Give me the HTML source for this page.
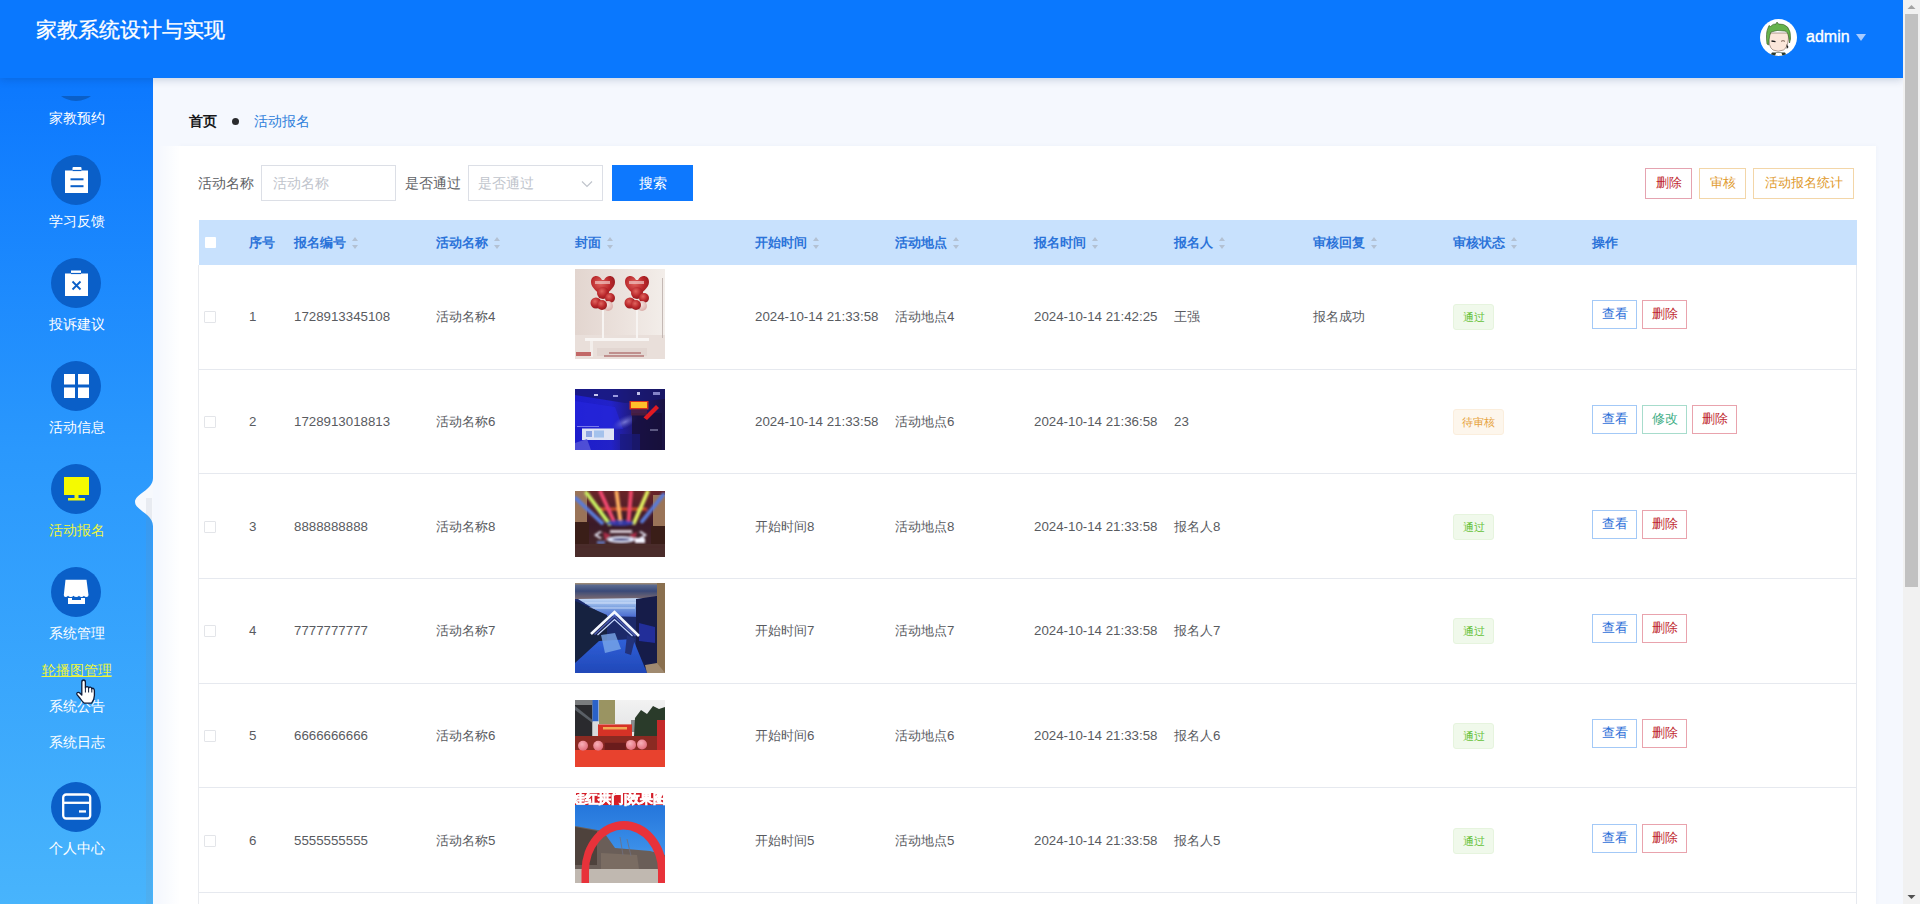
<!DOCTYPE html><html><head><meta charset="utf-8"><title>活动报名</title><style>
*{box-sizing:border-box;margin:0;padding:0}
html,body{width:1920px;height:904px;overflow:hidden}
body{position:relative;background:#f5f8fe;font-family:"Liberation Sans", sans-serif;color:#606266}
.a{position:absolute;white-space:nowrap}
.t{position:absolute;white-space:nowrap;line-height:20px;height:20px}
#hdr{position:absolute;left:0;top:0;width:1903px;height:78px;background:#0a78fe;z-index:5;box-shadow:0 2px 8px rgba(0,40,90,.18)}
#side{position:absolute;left:0;top:78px;width:153px;height:826px;background:linear-gradient(#0c78fe 0%,#2a98fd 45%,#48b4fc 100%);overflow:hidden;z-index:3}
.circ{position:absolute;left:51px;width:50px;height:50px;border-radius:50%;background:#0a5fc8}
.circ svg{position:absolute;left:0;top:0}
.lab{position:absolute;left:0;width:153px;text-align:center;color:#fff;font-size:14px;line-height:20px;height:20px}
#card{position:absolute;left:180px;top:146px;width:1696px;height:800px;background:#fff;box-shadow:0 0 5px rgba(60,80,120,.04)}
.th{position:absolute;top:233px;font-size:13px;font-weight:bold;color:#2b73d9;line-height:20px}
.sort{display:inline-block;vertical-align:middle;width:8px;height:14px;margin-left:5px;position:relative;top:-1px}
.td{position:absolute;font-size:13.3px;color:#595b5f;line-height:20px;height:20px}
.cb{position:absolute;left:204px;width:12px;height:12px;border:1px solid #e3e5e9;background:#fff;border-radius:1px}
.btn{position:absolute;height:29px;width:45px;border:1px solid;font-size:13px;line-height:25px;text-align:center;background:#fff}
.bv{border-color:#a3c9f7;color:#2d6fd8}
.bd{border-color:#e9a3ad;color:#c0282f}
.be{border-color:#a7dccc;color:#3fae86}
.tag{position:absolute;height:26px;font-size:11px;line-height:26px;text-align:center;border-radius:3px}
.tp{background:#f0f9eb;color:#67c23a;width:41px;border:1px solid #e6f4de;line-height:24px}
.tw{background:#fdf6ec;color:#e6a23c;width:51px;border:1px solid #fbeedd;line-height:24px}
.rowline{position:absolute;left:199px;width:1658px;height:1px;background:#e6e9ef}
</style></head><body>
<div class="t" style="left:189px;top:111px;font-size:14px;font-weight:bold;color:#17181a">首页</div>
<div class="a" style="left:232px;top:118px;width:7px;height:7px;border-radius:50%;background:#2a2b2e"></div>
<div class="t" style="left:254px;top:111px;font-size:14px;color:#2f80db">活动报名</div>
<div id="card"></div>
<div class="a" style="left:158px;top:146px;width:22px;height:758px;background:linear-gradient(90deg,rgba(255,255,255,0),#fff)"></div>
<div class="t" style="left:198px;top:173px;font-size:14px;color:#606266">活动名称</div>
<div class="a" style="left:261px;top:165px;width:135px;height:36px;border:1px solid #dcdfe6;background:#fff"></div>
<div class="t" style="left:273px;top:173px;font-size:14px;color:#c0c4cc">活动名称</div>
<div class="t" style="left:405px;top:173px;font-size:14px;color:#606266">是否通过</div>
<div class="a" style="left:468px;top:165px;width:135px;height:36px;border:1px solid #dcdfe6;background:#fff"></div>
<div class="t" style="left:478px;top:173px;font-size:14px;color:#c0c4cc">是否通过</div>
<svg class="a" style="left:581px;top:180px" width="12" height="8" viewBox="0 0 12 8"><path d="M1 1.5 L6 6.5 L11 1.5" fill="none" stroke="#c0c4cc" stroke-width="1.2"/></svg>
<div class="a" style="left:612px;top:165px;width:81px;height:36px;background:#0d78fe;color:#fff;font-size:14px;line-height:36px;text-align:center">搜索</div>
<div class="a" style="left:1645px;top:168px;width:47px;height:31px;border:1px solid #e5a3b0;color:#c0282f;font-size:13.3px;line-height:28px;text-align:center;background:#fff">删除</div>
<div class="a" style="left:1699px;top:168px;width:47px;height:31px;border:1px solid #f3d6a8;color:#e09a2c;font-size:13.3px;line-height:28px;text-align:center;background:#fff">审核</div>
<div class="a" style="left:1753px;top:168px;width:101px;height:31px;border:1px solid #f3d6a8;color:#e09a2c;font-size:13.3px;line-height:28px;text-align:center;background:#fff">活动报名统计</div>
<div class="a" style="left:199px;top:220px;width:1658px;height:45px;background:#c8e1fd"></div>
<div class="a" style="left:198px;top:265px;width:1px;height:640px;background:#e9ebef"></div>
<div class="a" style="left:1856px;top:265px;width:1px;height:640px;background:#e6e9ef"></div>
<div class="a" style="left:205px;top:237px;width:11px;height:11px;background:#fff;border-radius:1px"></div>
<div class="th" style="left:249px">序号</div>
<div class="th" style="left:294px">报名编号<svg class="sort" viewBox="0 0 8 14" width="8" height="14"><path d="M4 1 L7 5 L1 5 Z" fill="#b3c1d3"/><path d="M4 13 L7 9 L1 9 Z" fill="#b3c1d3"/></svg></div>
<div class="th" style="left:436px">活动名称<svg class="sort" viewBox="0 0 8 14" width="8" height="14"><path d="M4 1 L7 5 L1 5 Z" fill="#b3c1d3"/><path d="M4 13 L7 9 L1 9 Z" fill="#b3c1d3"/></svg></div>
<div class="th" style="left:575px">封面<svg class="sort" viewBox="0 0 8 14" width="8" height="14"><path d="M4 1 L7 5 L1 5 Z" fill="#b3c1d3"/><path d="M4 13 L7 9 L1 9 Z" fill="#b3c1d3"/></svg></div>
<div class="th" style="left:755px">开始时间<svg class="sort" viewBox="0 0 8 14" width="8" height="14"><path d="M4 1 L7 5 L1 5 Z" fill="#b3c1d3"/><path d="M4 13 L7 9 L1 9 Z" fill="#b3c1d3"/></svg></div>
<div class="th" style="left:895px">活动地点<svg class="sort" viewBox="0 0 8 14" width="8" height="14"><path d="M4 1 L7 5 L1 5 Z" fill="#b3c1d3"/><path d="M4 13 L7 9 L1 9 Z" fill="#b3c1d3"/></svg></div>
<div class="th" style="left:1034px">报名时间<svg class="sort" viewBox="0 0 8 14" width="8" height="14"><path d="M4 1 L7 5 L1 5 Z" fill="#b3c1d3"/><path d="M4 13 L7 9 L1 9 Z" fill="#b3c1d3"/></svg></div>
<div class="th" style="left:1174px">报名人<svg class="sort" viewBox="0 0 8 14" width="8" height="14"><path d="M4 1 L7 5 L1 5 Z" fill="#b3c1d3"/><path d="M4 13 L7 9 L1 9 Z" fill="#b3c1d3"/></svg></div>
<div class="th" style="left:1313px">审核回复<svg class="sort" viewBox="0 0 8 14" width="8" height="14"><path d="M4 1 L7 5 L1 5 Z" fill="#b3c1d3"/><path d="M4 13 L7 9 L1 9 Z" fill="#b3c1d3"/></svg></div>
<div class="th" style="left:1453px">审核状态<svg class="sort" viewBox="0 0 8 14" width="8" height="14"><path d="M4 1 L7 5 L1 5 Z" fill="#b3c1d3"/><path d="M4 13 L7 9 L1 9 Z" fill="#b3c1d3"/></svg></div>
<div class="th" style="left:1592px">操作</div>
<div class="rowline" style="top:368.67px"></div>
<div class="cb" style="top:311.33px"></div>
<div class="td" style="left:249px;top:307.33px">1</div>
<div class="td" style="left:294px;top:307.33px">1728913345108</div>
<div class="td" style="left:436px;top:307.33px">活动名称4</div>
<div class="td" style="left:755px;top:307.33px">2024-10-14 21:33:58</div>
<div class="td" style="left:895px;top:307.33px">活动地点4</div>
<div class="td" style="left:1034px;top:307.33px">2024-10-14 21:42:25</div>
<div class="td" style="left:1174px;top:307.33px">王强</div>
<div class="td" style="left:1313px;top:307.33px">报名成功</div>
<div class="a img1" style="left:575px;top:269.33px;width:90px;height:90px;overflow:hidden"><div style="filter:blur(.35px)"><svg width="90" height="90" viewBox="0 0 90 90"><defs>
<linearGradient id="i1bg" x1="0" y1="0" x2="1" y2="0"><stop offset="0" stop-color="#e2d5cf"/><stop offset=".5" stop-color="#ebe1dc"/><stop offset="1" stop-color="#f3eeea"/></linearGradient>
<radialGradient id="i1b" cx=".4" cy=".35" r=".7"><stop offset="0" stop-color="#e0645e"/><stop offset=".6" stop-color="#b8262a"/><stop offset="1" stop-color="#8e1a1e"/></radialGradient>
<radialGradient id="i1p" cx=".4" cy=".35" r=".7"><stop offset="0" stop-color="#f5e4e0"/><stop offset="1" stop-color="#d9a9a5"/></radialGradient>
</defs>
<rect width="90" height="90" fill="url(#i1bg)"/>
<rect x="0" y="66" width="90" height="24" fill="#e9dfda"/>
<g id="i1c">
<rect x="27" y="40" width="2" height="30" fill="#f7f4f2"/>
<path d="M27 11 C24 5 16 6 16 13 C16 19 23 23 28 28 C33 23 40 19 40 13 C40 6 32 5 29 11 Z" fill="url(#i1b)"/>
<circle cx="28" cy="24" r="6" fill="url(#i1b)"/>
<circle cx="35" cy="29" r="5" fill="url(#i1b)"/>
<circle cx="21" cy="34" r="5.5" fill="url(#i1b)"/>
<circle cx="33" cy="37" r="5" fill="url(#i1p)"/>
<circle cx="27" cy="36" r="5" fill="url(#i1b)"/>
<rect x="20" y="12" width="15" height="3" fill="#f0c8c4" opacity=".7"/>
</g>
<use href="#i1c" x="34"/>
<rect x="87" y="9" width=".8" height="60" fill="#b8aca8"/>
<rect x="10" y="69" width="64" height="3" fill="#f8f5f3"/>
<rect x="15" y="72" width="3" height="16" fill="#f3eeeb"/>
<rect x="22" y="79" width="50" height="8" fill="#ddd0cb" opacity=".6"/>
<rect x="1" y="83" width="15" height="4" fill="#b84a4a" opacity=".8"/>
<rect x="34" y="83" width="32" height="2" fill="#b07070" opacity=".7"/>
<rect x="29" y="86" width="40" height="2" fill="#b07070" opacity=".7"/>
</svg>
</div></div>
<div class="tag tp" style="left:1453px;top:304.33px">通过</div>
<div class="btn bv" style="left:1592px;top:300.33px">查看</div>
<div class="btn bd" style="left:1642px;top:300.33px">删除</div>
<div class="rowline" style="top:473.34px"></div>
<div class="cb" style="top:416.00px"></div>
<div class="td" style="left:249px;top:412.00px">2</div>
<div class="td" style="left:294px;top:412.00px">1728913018813</div>
<div class="td" style="left:436px;top:412.00px">活动名称6</div>
<div class="td" style="left:755px;top:412.00px">2024-10-14 21:33:58</div>
<div class="td" style="left:895px;top:412.00px">活动地点6</div>
<div class="td" style="left:1034px;top:412.00px">2024-10-14 21:36:58</div>
<div class="td" style="left:1174px;top:412.00px">23</div>
<div class="a img2" style="left:575px;top:388.50px;width:90px;height:61px;overflow:hidden"><div style="filter:blur(.35px)"><svg width="90" height="61" viewBox="0 0 90 61"><defs>
<linearGradient id="i2bg" x1="0" y1="0" x2="1" y2="0"><stop offset="0" stop-color="#1c1ccc"/><stop offset=".4" stop-color="#2222c8"/><stop offset=".65" stop-color="#201a7a"/><stop offset="1" stop-color="#1a1240"/></linearGradient>
<radialGradient id="i2h" cx=".5" cy=".5" r=".5"><stop offset="0" stop-color="#8a8ae0" stop-opacity=".8"/><stop offset="1" stop-color="#5050c0" stop-opacity="0"/></radialGradient>
</defs>
<rect width="90" height="61" fill="url(#i2bg)"/>
<path d="M0 0 H90 V10 L50 14 L0 6 Z" fill="#181870" opacity=".75"/>
<rect x="19" y="5" width="4" height="2" fill="#c8c8f0"/><rect x="38" y="6" width="5" height="2" fill="#9a9ae0"/><rect x="62" y="3" width="3" height="3" fill="#c0c0e8"/><rect x="78" y="3" width="7" height="3" fill="#a0a0e0" opacity=".8"/>
<path d="M0 12 L40 18 L48 40 L0 38 Z" fill="#2626e0" opacity=".6"/>
<ellipse cx="50" cy="33" rx="14" ry="6" fill="url(#i2h)" transform="rotate(-25 50 33)"/>
<rect x="57" y="24" width="30" height="37" fill="#160f38" opacity=".8"/>
<rect x="54.5" y="12" width="19" height="8.5" fill="#d8301a"/>
<rect x="56" y="13" width="16" height="6" fill="#ffbe2a"/>
<rect x="56" y="20.5" width="16" height="6" fill="#502040" opacity=".8"/>
<path d="M81 16 L84 19 L72 31 L68.5 28.5 Z" fill="#e01a22"/>
<rect x="2" y="37" width="22" height="1" fill="#9090f0" opacity=".8"/>
<rect x="7" y="39.5" width="32" height="11.5" fill="#dfe4f4"/>
<rect x="11" y="42" width="6" height="6" fill="#6a8ad8" opacity=".7"/><rect x="19" y="41.5" width="10" height="7" fill="#8ab4e8" opacity=".7"/>
<path d="M0 54 L12 50 L16 61 H0 Z" fill="#5a5ad8" opacity=".8"/>
<rect x="45" y="45" width="20" height="16" fill="#1a1a7a" opacity=".7"/>
<rect x="75" y="40" width="8" height="2" fill="#8a8ab0" opacity=".6"/>
</svg>
</div></div>
<div class="tag tw" style="left:1453px;top:409.00px">待审核</div>
<div class="btn bv" style="left:1592px;top:405.00px">查看</div>
<div class="btn be" style="left:1642px;top:405.00px">修改</div>
<div class="btn bd" style="left:1692px;top:405.00px">删除</div>
<div class="rowline" style="top:578.01px"></div>
<div class="cb" style="top:520.68px"></div>
<div class="td" style="left:249px;top:516.68px">3</div>
<div class="td" style="left:294px;top:516.68px">8888888888</div>
<div class="td" style="left:436px;top:516.68px">活动名称8</div>
<div class="td" style="left:755px;top:516.68px">开始时间8</div>
<div class="td" style="left:895px;top:516.68px">活动地点8</div>
<div class="td" style="left:1034px;top:516.68px">2024-10-14 21:33:58</div>
<div class="td" style="left:1174px;top:516.68px">报名人8</div>
<div class="a img3" style="left:575px;top:490.68px;width:90px;height:66px;overflow:hidden"><div style="filter:blur(.35px)"><svg width="90" height="66" viewBox="0 0 90 66"><defs>
<linearGradient id="i3bg" x1="0" y1="0" x2="0" y2="1"><stop offset="0" stop-color="#6a2428"/><stop offset=".5" stop-color="#3a1a28"/><stop offset="1" stop-color="#4a2a28"/></linearGradient>
<filter id="i3f" x="-10%" y="-10%" width="120%" height="120%"><feGaussianBlur stdDeviation=".8"/></filter>
</defs>
<rect width="90" height="66" fill="url(#i3bg)"/>
<rect x="0" y="0" width="12" height="31" fill="#9a7458"/>
<rect x="78" y="4" width="12" height="31" fill="#9a7458"/>
<rect x="0" y="31" width="14" height="25" fill="#3a1e18"/>
<rect x="76" y="35" width="14" height="21" fill="#3a1e18"/>
<g filter="url(#i3f)">
<rect x="25" y="16.5" width="47" height="3" fill="#e0502a" opacity=".9"/>
<g stroke-linecap="round" stroke-width="3.8">
<path d="M0.5 7 L27 32" stroke="#5a7ad8"/>
<path d="M11.5 2 L34.5 33" stroke="#c8f060"/>
<path d="M25.5 1 L39 30.5" stroke="#f04a70"/>
<path d="M41.5 1 L45.5 31" stroke="#ffb060"/>
<path d="M56 1 L53.5 30.5" stroke="#f04a6a"/>
<path d="M72.5 1 L59 32" stroke="#e0f060"/>
<path d="M88.5 3.5 L67 30.5" stroke="#5a7ad8"/>
</g>
<ellipse cx="45" cy="32" rx="14" ry="3" fill="#3040c0" opacity=".8"/>
<path d="M25 40 L19 44 L25 48 L27 47 L22 44 L27 41 Z" fill="#f0f0ff"/>
<path d="M66 40 L72 44 L66 48 L64 47 L69 44 L64 41 Z" fill="#f0f0ff"/>
<path d="M28 41 L36 44 L30 50 Z" fill="#c03050" opacity=".8"/>
<path d="M62 41 L54 44 L60 50 Z" fill="#c03050" opacity=".8"/>
<rect x="35" y="39" width="22" height="3" fill="#f0e8f0" opacity=".85"/>
<ellipse cx="46" cy="48.5" rx="14" ry="3.5" fill="#dfe4f8"/>
<ellipse cx="46" cy="48.5" rx="9" ry="1.5" fill="#404080"/>
<rect x="60" y="47" width="10" height="5" fill="#f4f4ff"/>
<rect x="22" y="50" width="8" height="3" fill="#6a8ad8" opacity=".8"/>
</g>
<rect x="0" y="53" width="90" height="13" fill="#4a2c2a"/>
<rect x="0" y="55" width="90" height="2" fill="#4a2a2a" opacity=".7"/>
</svg>
</div></div>
<div class="tag tp" style="left:1453px;top:513.68px">通过</div>
<div class="btn bv" style="left:1592px;top:509.68px">查看</div>
<div class="btn bd" style="left:1642px;top:509.68px">删除</div>
<div class="rowline" style="top:682.68px"></div>
<div class="cb" style="top:625.35px"></div>
<div class="td" style="left:249px;top:621.35px">4</div>
<div class="td" style="left:294px;top:621.35px">7777777777</div>
<div class="td" style="left:436px;top:621.35px">活动名称7</div>
<div class="td" style="left:755px;top:621.35px">开始时间7</div>
<div class="td" style="left:895px;top:621.35px">活动地点7</div>
<div class="td" style="left:1034px;top:621.35px">2024-10-14 21:33:58</div>
<div class="td" style="left:1174px;top:621.35px">报名人7</div>
<div class="a img4" style="left:575px;top:583.35px;width:90px;height:90px;overflow:hidden"><div style="filter:blur(.35px)"><svg width="90" height="90" viewBox="0 0 90 90"><defs>
<linearGradient id="i4t" x1="0" y1="0" x2="0" y2="1"><stop offset="0" stop-color="#a89070"/><stop offset=".15" stop-color="#5a6a90"/><stop offset=".5" stop-color="#3a4a78"/><stop offset="1" stop-color="#7a6a70"/></linearGradient>
<linearGradient id="i4c" x1="0" y1="0" x2="0" y2="1"><stop offset="0" stop-color="#c8dcf8"/><stop offset=".5" stop-color="#7aa0e0"/><stop offset="1" stop-color="#4a6ad0"/></linearGradient>
<linearGradient id="i4f" x1="0" y1="0" x2="0" y2="1"><stop offset="0" stop-color="#3060d8"/><stop offset="1" stop-color="#2048b8"/></linearGradient>
<filter id="i4b"><feGaussianBlur stdDeviation=".6"/></filter>
</defs>
<g filter="url(#i4b)">
<rect width="90" height="90" fill="#1a2a6a"/>
<rect width="90" height="16" fill="url(#i4t)"/>
<path d="M3 16 L71 15 L66 34 L30 33 Z" fill="url(#i4c)"/>
<path d="M10 20 H62 M14 25 H60" stroke="#e8f0ff" stroke-width="1" opacity=".7"/>
<path d="M0 18 L32 32 L32 76 L0 80 Z" fill="#182040"/>
<path d="M61 16 L82 13 L82 86 L61 84 Z" fill="#141a48"/>
<path d="M64 40 L80 44 L80 60 L64 58 Z" fill="#2a3ad0" opacity=".6"/>
<rect x="82" y="0" width="8" height="90" fill="#8a7050"/>
<path d="M0 90 L0 80 L24 58 L58 56 L72 90 Z" fill="url(#i4f)"/>
<path d="M72 90 L70 82 L82 80 L90 90 Z" fill="#a08a70"/>
<path d="M26 52 L40 50 L46 66 L30 70 Z" fill="#7aa8e8" opacity=".8"/>
<path d="M52 52 L60 56 L56 72 L50 70 Z" fill="#24307a"/>
<path d="M16 51 L39.5 29 L64 53" fill="none" stroke="#f4f8ff" stroke-width="2.6"/>
<path d="M19.5 51.5 L39.5 33 L60.5 53" fill="none" stroke="#4a5ab0" stroke-width="1.6"/>
<path d="M22.5 52 L39.5 36.5 L57.5 53" fill="none" stroke="#c8d8ff" stroke-width="1.2"/>
</g>
</svg>
</div></div>
<div class="tag tp" style="left:1453px;top:618.35px">通过</div>
<div class="btn bv" style="left:1592px;top:614.35px">查看</div>
<div class="btn bd" style="left:1642px;top:614.35px">删除</div>
<div class="rowline" style="top:787.35px"></div>
<div class="cb" style="top:730.02px"></div>
<div class="td" style="left:249px;top:726.02px">5</div>
<div class="td" style="left:294px;top:726.02px">6666666666</div>
<div class="td" style="left:436px;top:726.02px">活动名称6</div>
<div class="td" style="left:755px;top:726.02px">开始时间6</div>
<div class="td" style="left:895px;top:726.02px">活动地点6</div>
<div class="td" style="left:1034px;top:726.02px">2024-10-14 21:33:58</div>
<div class="td" style="left:1174px;top:726.02px">报名人6</div>
<div class="a img5" style="left:575px;top:699.52px;width:90px;height:67px;overflow:hidden"><div style="filter:blur(.35px)"><svg width="90" height="67" viewBox="0 0 90 67"><defs>
<linearGradient id="i5s" x1="0" y1="0" x2="0" y2="1"><stop offset="0" stop-color="#f2f2f2"/><stop offset="1" stop-color="#d4d6d8"/></linearGradient>
<radialGradient id="i5b" cx=".4" cy=".35" r=".7"><stop offset="0" stop-color="#f8b0b8"/><stop offset="1" stop-color="#e06a78"/></radialGradient>
<filter id="i5f"><feGaussianBlur stdDeviation=".5"/></filter>
</defs>
<rect width="90" height="67" fill="url(#i5s)"/>
<g filter="url(#i5f)">
<rect x="0" y="0" width="17.5" height="50" fill="#2a2c2e"/>
<rect x="0" y="0" width="17.5" height="5" fill="#7a7c7e"/>
<path d="M0 6 L17.5 20 V23 L0 10 Z" fill="#5a5e66"/>
<rect x="17.5" y="0" width="6" height="21.5" fill="#2a62c8"/>
<rect x="17.5" y="21.5" width="6" height="16" fill="#d8dadc"/>
<rect x="24" y="0" width="16" height="24" fill="#9a9462"/>
<rect x="56" y="20" width="12" height="12" fill="#8a8c8e"/>
<path d="M59 36 L60 18 L66 10 L72 14 L78 6 L84 9 L90 7 V45 L59 45 Z" fill="#2a3a2a"/>
<rect x="23" y="24.4" width="34" height="12" fill="#d63028"/>
<rect x="28" y="27" width="24" height="2.5" fill="#f8c860" opacity=".8"/>
<rect x="0" y="36" width="90" height="14.5" fill="#8a2a24"/>
<rect x="29.7" y="42.8" width="21" height="7.2" fill="#6a1a1e"/>
<rect x="82" y="20" width="8" height="38" fill="#c42a2a"/>
<rect x="0" y="50" width="90" height="17.4" fill="#e8432e"/>
<circle cx="8" cy="45.7" r="5" fill="url(#i5b)"/>
<circle cx="23.2" cy="45.7" r="5" fill="url(#i5b)"/>
<circle cx="56" cy="44.9" r="5" fill="url(#i5b)"/>
<circle cx="67" cy="44.5" r="5" fill="url(#i5b)"/>
</g>
</svg>
</div></div>
<div class="tag tp" style="left:1453px;top:723.02px">通过</div>
<div class="btn bv" style="left:1592px;top:719.02px">查看</div>
<div class="btn bd" style="left:1642px;top:719.02px">删除</div>
<div class="rowline" style="top:892.02px"></div>
<div class="cb" style="top:834.69px"></div>
<div class="td" style="left:249px;top:830.69px">6</div>
<div class="td" style="left:294px;top:830.69px">5555555555</div>
<div class="td" style="left:436px;top:830.69px">活动名称5</div>
<div class="td" style="left:755px;top:830.69px">开始时间5</div>
<div class="td" style="left:895px;top:830.69px">活动地点5</div>
<div class="td" style="left:1034px;top:830.69px">2024-10-14 21:33:58</div>
<div class="td" style="left:1174px;top:830.69px">报名人5</div>
<div class="a img6" style="left:575px;top:792.69px;width:90px;height:90px;overflow:hidden"><div style="filter:blur(.35px)"><svg width="90" height="90" viewBox="0 0 90 90"><defs>
<linearGradient id="i6s" x1="0" y1="0" x2="0" y2="1"><stop offset="0" stop-color="#1f6fd8"/><stop offset=".6" stop-color="#3a8ee8"/><stop offset="1" stop-color="#6aaef0"/></linearGradient>
</defs>
<rect width="90" height="90" fill="url(#i6s)"/>
<rect x="0" y="0" width="90" height="12" fill="#d41e28"/>
<text x="-3" y="10" font-size="13" font-weight="bold" fill="#fff" stroke="#fff" stroke-width=".7" font-family="Liberation Sans, sans-serif" textLength="94" lengthAdjust="spacingAndGlyphs">娃红拱门|效果图</text>
<path d="M0 33 L28 38 L40 55 L75 58 L90 62 V90 H0 Z" fill="#6a5e58"/>
<path d="M0 34 L22 38 L22 72 L0 72 Z" fill="#4e423c"/>
<path d="M26 60 L62 62 L64 76 L26 76 Z" fill="#7a6c62"/>
<rect x="0" y="76" width="90" height="14" fill="#c0b8b0"/>
<path d="M6.5 90 V78 A42.5 50 0 0 1 91.5 78 V90 H83 V78 A34.5 41.5 0 0 0 14 78 V90 Z" fill="#e8323a"/>
<path d="M45 44 L48 62 M52 46 L56 63" stroke="#707080" stroke-width=".8"/>
</svg>
</div></div>
<div class="tag tp" style="left:1453px;top:827.69px">通过</div>
<div class="btn bv" style="left:1592px;top:823.69px">查看</div>
<div class="btn bd" style="left:1642px;top:823.69px">删除</div>
<div id="side"><!-- top partially visible item, sidebar top = 78 -->
<div class="a" style="left:0;top:18px;width:153px;height:808px;overflow:hidden">
  <div class="circ" style="top:-45px"></div>
</div>
<div class="lab" style="top:30px">家教预约</div>
<!-- 学习反馈 center y 180 -> rel 102 -->
<div class="circ" style="top:77px"><svg width="50" height="50" viewBox="0 0 50 50">
<path d="M14 15.5 H21.5 V13 Q21.5 12 22.5 12 H29.5 Q30.5 12 30.5 13 V15.5 H37 V38 H14 Z" fill="#fff"/>
<path d="M21.5 15.5 H30.5" stroke="#0a5fc8" stroke-width="1.2"/>
<rect x="19.5" y="23.3" width="13" height="2" fill="#0a5fc8"/>
<rect x="19.5" y="30.2" width="13" height="2" fill="#0a5fc8"/>
</svg></div>
<div class="lab" style="top:133px">学习反馈</div>
<div class="circ" style="top:180px"><svg width="50" height="50" viewBox="0 0 50 50">
<path d="M14 15.5 H20 V12.5 H30 V15.5 H37 V38 H14 Z" fill="#fff"/>
<path d="M20 15.5 H30" stroke="#0a5fc8" stroke-width="1.2"/>
<path d="M21.5 23.5 L29.5 31.5 M29.5 23.5 L21.5 31.5" stroke="#0a5fc8" stroke-width="1.8"/>
</svg></div>
<div class="lab" style="top:236px">投诉建议</div>
<div class="circ" style="top:283px"><svg width="50" height="50" viewBox="0 0 50 50">
<rect x="13" y="13" width="11" height="10.5" fill="#fff"/><rect x="27" y="13" width="11" height="10.5" fill="#fff"/>
<rect x="13" y="26.5" width="11" height="10.5" fill="#fff"/><rect x="27" y="26.5" width="11" height="10.5" fill="#fff"/>
</svg></div>
<div class="lab" style="top:339px">活动信息</div>
<div class="circ" style="top:386px"><svg width="50" height="50" viewBox="0 0 50 50">
<rect x="13" y="13" width="25" height="18" fill="#f5fa00"/>
<rect x="23.5" y="31" width="4" height="3" fill="#f5fa00"/>
<rect x="17" y="34" width="17" height="2.5" fill="#f5fa00"/>
</svg></div>
<div class="lab" style="top:442px;color:#eef53a">活动报名</div>
<div class="circ" style="top:489px"><svg width="50" height="50" viewBox="0 0 50 50">
<path d="M14.5 12.8 H35.5 L37.5 28 Q37.5 30 35.5 30 Q33.5 30 33 28.8 Q32 30 30.5 30 Q28.8 30 28 28.8 Q27 30 25.2 30 Q23.5 30 22.5 28.8 Q21.5 30 19.8 30 Q18 30 17 28.8 Q16 30 14.5 30 Q12.8 30 12.8 28 Z" fill="#fff"/>
<path d="M17 31 H34 V37 H17 Z" fill="#fff"/>
<rect x="21" y="31" width="9" height="2" fill="#0a5fc8"/>
</svg></div>
<div class="lab" style="top:545px">系统管理</div>
<div class="lab" style="top:582px;color:#eef53a;text-decoration:underline">轮播图管理</div>
<div class="lab" style="top:618px">系统公告</div>
<div class="lab" style="top:654px">系统日志</div>
<div class="circ" style="top:704px"><svg width="50" height="50" viewBox="0 0 50 50">
<rect x="12.2" y="12.5" width="27" height="24" rx="3" fill="none" stroke="#fff" stroke-width="2.3"/>
<path d="M12.2 20.8 H39.2" stroke="#fff" stroke-width="2.3"/>
<rect x="28" y="28.3" width="7" height="2.3" fill="#fff"/>
</svg></div>
<div class="lab" style="top:760px">个人中心</div>
<!-- notch -->
<svg class="a" style="left:133px;top:400px" width="20" height="48" viewBox="0 0 20 48"><path d="M20 0 C20 12 2 16 2 24 C2 32 20 36 20 48 Z" fill="#f7f9fd"/></svg>
<div class="a" style="left:146px;top:420px;width:6px;height:406px;background:rgba(120,140,160,.12)"></div>
<!-- cursor -->
<svg class="a" style="left:75.5px;top:601px" width="20" height="26" viewBox="0 0 20 26">
<path d="M5.8 3.2 Q5.8 1 7.6 1 Q9.4 1 9.4 3.2 V8.8 Q9.8 7.6 11.2 7.7 Q12.4 7.8 12.6 9.2 Q13.1 8 14.4 8.2 Q15.6 8.4 15.8 9.8 Q16.4 9 17.3 9.4 Q18.4 10 18.4 11.8 V16.5 Q18.4 20.5 15.6 24.2 H8.4 Q6.2 22.6 4.2 19.5 L1.2 15.8 Q0.2 14.3 1.5 13.5 Q2.8 12.9 4.1 14.2 L5.8 16 Z" fill="#fff" stroke="#0d1b3a" stroke-width="1.3" stroke-linejoin="round"/>
<path d="M9.4 8.8 V13.5 M12.6 9.2 V13.5 M15.8 9.8 V13.5" stroke="#0d1b3a" stroke-width="1"/>
</svg>
</div>
<div id="hdr"><div class="t" style="left:36px;top:16px;height:28px;line-height:28px;font-size:21.3px;color:#fff;-webkit-text-stroke:.3px #fff">家教系统设计与实现</div>
<svg class="a" style="left:1760px;top:19px" width="37" height="37" viewBox="0 0 37 37">
<defs><clipPath id="avc"><circle cx="18.5" cy="18.5" r="18.5"/></clipPath></defs>
<circle cx="18.5" cy="18.5" r="18.5" fill="#fff"/>
<g clip-path="url(#avc)">
<path d="M10 37 L12 33.5 L25 33.5 L27 37 Z" fill="#2a3a2c"/>
<path d="M15 37 L16 34 L21.5 34 L22.5 37 Z" fill="#fff"/>
<path d="M8.5 14 Q8 28 13 31 Q18 33.5 23.5 31 Q29 28 28.5 14 Z" fill="#fbe7da" stroke="#5a4032" stroke-width="0.5"/>
<path d="M7 25 Q5.5 14 8 9 L9 6.5 L10.5 7.5 Q13 4.5 16 5 L17 3 L18.5 5 Q24 4.5 27.5 8 Q31 12 30.5 20 L29.5 24 Q29 17 27.5 14 Q26 11.5 24 12 Q17 10.5 11 13 Q9.5 16 9 21 L8.5 26 Z" fill="#66b24c" stroke="#30561f" stroke-width="0.6"/>
<path d="M11.5 22 L15.5 22.6" stroke="#1a1a1a" stroke-width="1.3"/>
<path d="M21 22.3 Q23 21 25 22.3" stroke="#5a4032" stroke-width="0.8" fill="none"/>
<path d="M26.5 25 L28.5 28 L26.8 30 Z" fill="#1a1a1a"/>
</g>
</svg>
<div class="t" style="left:1806px;top:27px;font-size:16px;color:#fff;-webkit-text-stroke:.35px #fff">admin</div>
<svg class="a" style="left:1856px;top:34px" width="10" height="7" viewBox="0 0 10 7"><path d="M0 0 L10 0 L5 7 Z" fill="#a8ccff"/></svg>
</div>
<div class="a" style="left:1903px;top:0;width:17px;height:904px;background:#f1f1f1;z-index:6"></div>
<div class="a" style="left:1905px;top:14px;width:13px;height:573px;background:#c1c1c1;z-index:7"></div>
<svg class="a" style="left:1903px;top:0;z-index:7" width="17" height="14"><path d="M4.5 9 L8.5 5 L12.5 9 Z" fill="#a3a3a3"/></svg>
<svg class="a" style="left:1903px;top:890px;z-index:7" width="17" height="14"><path d="M4.5 5 L8.5 9 L12.5 5 Z" fill="#505050"/></svg>
</body></html>
